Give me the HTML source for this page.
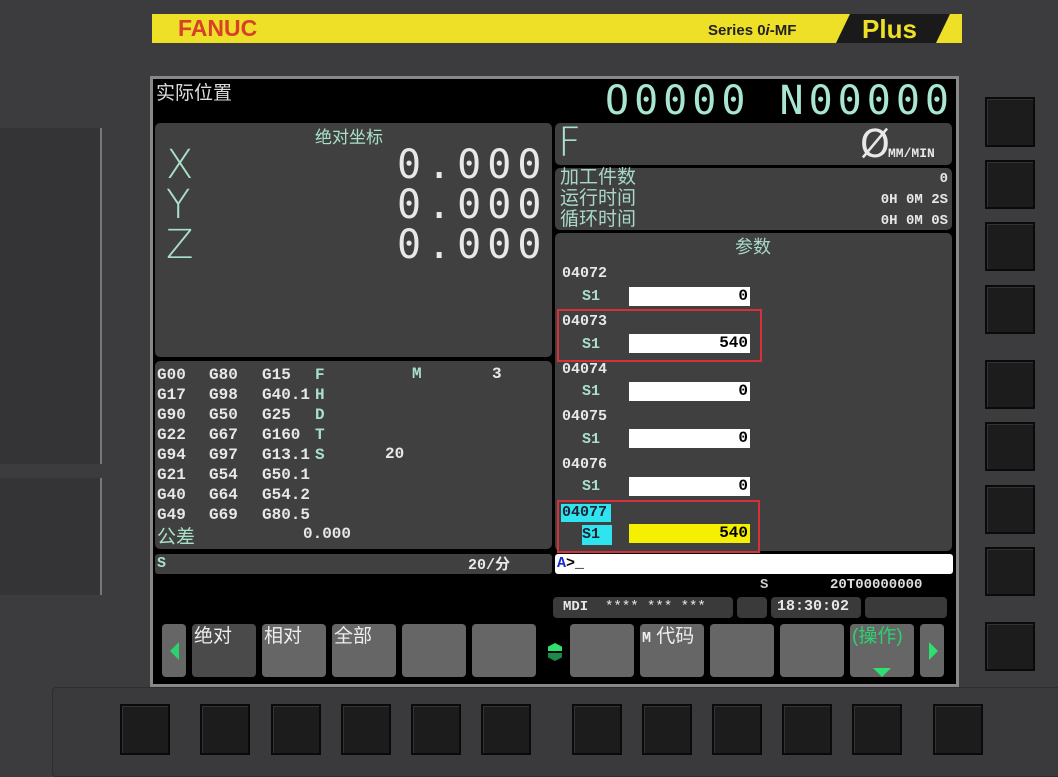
<!DOCTYPE html>
<html><head><meta charset="utf-8"><style>
*{margin:0;padding:0;box-sizing:border-box}
body{width:1058px;height:771px;background:#3c3c3e;position:relative;overflow:hidden;font-family:"Liberation Mono","Noto Sans CJK SC",monospace}
.a{position:absolute}
.key{position:absolute;background:#1c1c1c;border:2px solid #0a0a0a;box-shadow:inset 1px 1px 0 #333}
.pn{position:absolute;background:#404040;border-radius:5px}
.t{position:absolute;color:#a8e0c8;white-space:pre}
.w{position:absolute;color:#e8e8e8;white-space:pre;font-weight:bold}
.g{position:absolute;color:#e8e8e8;white-space:pre;font-weight:bold;font-size:16px;line-height:20px;top:365px}
.sk{position:absolute;top:624px;height:53px;background:#666;border-radius:4px;color:#eee;font-family:"Liberation Sans","Noto Sans CJK SC",sans-serif;font-size:19px;padding:0 2px;line-height:26px}
.box{position:absolute;left:629px;width:121px;height:19px;background:#fff;color:#000;text-align:right;font-weight:bold;font-size:16px;line-height:19px;padding-right:2px}
.pid{font-size:15px}
</style></head><body>
<!-- banner -->
<div class="a" style="left:152px;top:14px;width:810px;height:29px;background:#ede027"></div>
<div class="a" style="left:178px;top:14px;font-family:'Liberation Sans',sans-serif;font-weight:bold;font-size:23px;color:#d8402a;line-height:29px">FANUC</div>
<div class="a" style="left:708px;top:14px;font-family:'Liberation Sans',sans-serif;font-weight:bold;font-size:15px;color:#222;line-height:34px">Series 0<i>i</i>-MF</div>
<div class="a" style="left:836px;top:14px;width:114px;height:29px;background:#1a1a1a;clip-path:polygon(14px 0,100% 0,calc(100% - 14px) 100%,0 100%)"></div>
<div class="a" style="left:862px;top:13px;font-family:'Liberation Sans',sans-serif;font-weight:bold;font-size:26px;color:#ede027;line-height:32px">Plus</div>
<!-- left side panels -->
<div class="a" style="left:0;top:128px;width:102px;height:336px;background:#343436;border-right:2px solid #777"></div>
<div class="a" style="left:0;top:478px;width:102px;height:117px;background:#343436;border-right:2px solid #777"></div>
<!-- right keys -->
<div class="key" style="left:985px;top:97px;width:50px;height:50px"></div>
<div class="key" style="left:985px;top:160px;width:50px;height:49px"></div>
<div class="key" style="left:985px;top:222px;width:50px;height:49px"></div>
<div class="key" style="left:985px;top:285px;width:50px;height:49px"></div>
<div class="key" style="left:985px;top:360px;width:50px;height:49px"></div>
<div class="key" style="left:985px;top:422px;width:50px;height:49px"></div>
<div class="key" style="left:985px;top:485px;width:50px;height:49px"></div>
<div class="key" style="left:985px;top:547px;width:50px;height:49px"></div>
<div class="key" style="left:985px;top:622px;width:50px;height:49px"></div>
<!-- bottom bezel -->
<div class="a" style="left:52px;top:687px;width:1010px;height:90px;background:#3a3a3c;border:1px solid #2e2e2e;border-radius:4px"></div>
<div class="key" style="left:120px;top:704px;width:50px;height:51px"></div>
<div class="key" style="left:200px;top:704px;width:50px;height:51px"></div>
<div class="key" style="left:271px;top:704px;width:50px;height:51px"></div>
<div class="key" style="left:341px;top:704px;width:50px;height:51px"></div>
<div class="key" style="left:411px;top:704px;width:50px;height:51px"></div>
<div class="key" style="left:481px;top:704px;width:50px;height:51px"></div>
<div class="key" style="left:572px;top:704px;width:50px;height:51px"></div>
<div class="key" style="left:642px;top:704px;width:50px;height:51px"></div>
<div class="key" style="left:712px;top:704px;width:50px;height:51px"></div>
<div class="key" style="left:782px;top:704px;width:50px;height:51px"></div>
<div class="key" style="left:852px;top:704px;width:50px;height:51px"></div>
<div class="key" style="left:933px;top:704px;width:50px;height:51px"></div>
<!-- screen -->
<div class="a" style="left:150px;top:76px;width:809px;height:611px;background:#888"></div>
<div class="a" style="left:153px;top:79px;width:803px;height:605px;background:#000"></div>
<div class="a" style="left:156px;top:78px;color:#ddd;font-family:'Liberation Sans','Noto Sans CJK SC',sans-serif;font-size:19px">实际位置</div>
<div class="t" style="left:605px;top:79px;font-size:40px;line-height:44px;letter-spacing:5px;font-family:'DejaVu Sans Mono',monospace;color:#a8e6d2">O0000 N00000</div>
<!-- left panel -->
<div class="pn" style="left:155px;top:123px;width:397px;height:234px"></div>
<div class="t" style="left:315px;top:123px;font-family:'Noto Sans CJK SC',sans-serif;font-size:17px;color:#a8e0c8">绝对坐标</div>
<div class="t" style="left:166px;top:145px;font-size:40px;line-height:40px;font-family:'DejaVu Sans',sans-serif;font-weight:200">X<br>Y<br>Z</div>
<div class="w" style="left:397px;top:145px;font-size:40px;line-height:40px;font-family:'DejaVu Sans Mono',monospace;letter-spacing:6px;font-weight:normal">0.000<br>0.000<br>0.000</div>
<!-- F panel -->
<div class="pn" style="left:555px;top:123px;width:397px;height:42px"></div>
<div class="t" style="left:558px;top:122px;font-size:40px;line-height:42px;font-family:'DejaVu Sans',sans-serif;font-weight:200">F</div>
<div class="w" style="left:860px;top:123px;font-size:38px;line-height:42px;font-family:'DejaVu Sans',sans-serif;font-weight:normal">Ø</div>
<div class="w" style="left:888px;top:146px;font-size:13px">MM/MIN</div>
<div class="pn" style="left:555px;top:168px;width:397px;height:62px"></div>
<div class="t" style="left:560px;top:165px;font-family:'Noto Sans CJK SC',sans-serif;font-size:19px;line-height:21px;color:#a8d8c8">加工件数<br>运行时间<br>循环时间</div>
<div class="w" style="left:800px;top:169px;width:148px;text-align:right;font-size:14px;line-height:21px">0<br>0H 0M 2S<br>0H 0M 0S</div>
<!-- params -->
<div class="pn" style="left:555px;top:233px;width:397px;height:318px"></div>
<div class="t" style="left:735px;top:233px;font-family:'Noto Sans CJK SC',sans-serif;font-size:18px;color:#a8d8c8">参数</div>
<div class="w pid" style="left:562px;top:265px">04072</div><div class="t pid" style="left:582px;top:288px;font-weight:bold">S1</div><div class="box" style="top:287px">0</div>
<div class="w pid" style="left:562px;top:313px">04073</div><div class="t pid" style="left:582px;top:336px;font-weight:bold">S1</div><div class="box" style="top:334px">540</div>
<div class="w pid" style="left:562px;top:361px">04074</div><div class="t pid" style="left:582px;top:383px;font-weight:bold">S1</div><div class="box" style="top:382px">0</div>
<div class="w pid" style="left:562px;top:408px">04075</div><div class="t pid" style="left:582px;top:431px;font-weight:bold">S1</div><div class="box" style="top:429px">0</div>
<div class="w pid" style="left:562px;top:456px">04076</div><div class="t pid" style="left:582px;top:478px;font-weight:bold">S1</div><div class="box" style="top:477px">0</div>
<div class="a" style="left:561px;top:504px;width:50px;height:18px;background:#2ee4ee"></div>
<div class="a pid" style="left:562px;top:504px;color:#223;font-weight:bold">04077</div>
<div class="a" style="left:582px;top:525px;width:30px;height:20px;background:#2ee4ee"></div>
<div class="a pid" style="left:582px;top:526px;color:#223;font-weight:bold">S1</div>
<div class="box" style="top:524px;background:#f4f000">540</div>
<div class="a" style="left:557px;top:309px;width:205px;height:53px;border:2px solid #d8303a"></div>
<div class="a" style="left:557px;top:500px;width:203px;height:53px;border:2px solid #d8303a"></div>
<!-- modal -->
<div class="pn" style="left:155px;top:361px;width:397px;height:188px"></div>
<div class="g" style="left:157px">G00
G17
G90
G22
G94
G21
G40
G49</div>
<div class="g" style="left:209px">G80
G98
G50
G67
G97
G54
G64
G69</div>
<div class="g" style="left:262px">G15
G40.1
G25
G160
G13.1
G50.1
G54.2
G80.5</div>
<div class="t" style="left:315px;top:365px;font-size:16px;line-height:20px;font-weight:bold">F<br>H<br>D<br>T<br>S</div>
<div class="t" style="left:412px;top:365px;font-size:16px;font-weight:bold">M</div>
<div class="w" style="left:492px;top:365px;font-size:16px">3</div>
<div class="w" style="left:385px;top:445px;font-size:16px">20</div>
<div class="t" style="left:157px;top:524px;font-family:'Noto Sans CJK SC',sans-serif;font-size:19px;line-height:24px">公差</div>
<div class="w" style="left:303px;top:525px;font-size:16px">0.000</div>
<div class="pn" style="left:155px;top:554px;width:397px;height:20px;border-radius:3px"></div>
<div class="t" style="left:157px;top:555px;font-size:15px;font-weight:bold">S</div>
<div class="w" style="left:468px;top:553px;font-size:15px;font-family:'Liberation Mono','Noto Sans CJK SC',monospace">20/分</div>
<div class="a" style="left:555px;top:554px;width:398px;height:20px;background:#fff;border-radius:3px"></div>
<div class="a" style="left:557px;top:555px;font-size:15px;font-weight:bold;color:#1a28d0">A<span style="color:#000">&gt;_</span></div>
<div class="w" style="left:760px;top:577px;font-size:14px;color:#ccc">S</div>
<div class="w" style="left:830px;top:577px;font-size:14px;color:#ddd">20T00000000</div>
<div class="a" style="left:553px;top:597px;width:180px;height:21px;background:#3a3a3a;border-radius:4px"></div>
<div class="w" style="left:563px;top:599px;font-size:14px">MDI  <span style="font-weight:normal">**** *** ***</span></div>
<div class="a" style="left:737px;top:597px;width:30px;height:21px;background:#3a3a3a;border-radius:4px"></div>
<div class="a" style="left:771px;top:597px;width:90px;height:21px;background:#3a3a3a;border-radius:4px"></div>
<div class="w" style="left:777px;top:598px;font-size:15px">18:30:02</div>
<div class="a" style="left:865px;top:597px;width:82px;height:21px;background:#3a3a3a;border-radius:4px"></div>
<!-- softkeys -->
<div class="sk" style="left:162px;width:24px"></div>
<div class="a" style="left:170px;top:642px;width:0;height:0;border-top:9px solid transparent;border-bottom:9px solid transparent;border-right:9px solid #2ed070"></div>
<div class="sk" style="left:192px;width:64px;background:#4a4a4a">绝对</div>
<div class="sk" style="left:262px;width:64px">相对</div>
<div class="sk" style="left:332px;width:64px">全部</div>
<div class="sk" style="left:402px;width:64px"></div>
<div class="sk" style="left:472px;width:64px"></div>
<div class="a" style="left:548px;top:643px;width:14px;height:18px;background:linear-gradient(#2ee070 45%,transparent 45%,transparent 55%,#1a8a48 55%);clip-path:polygon(50% 0,100% 20%,100% 80%,50% 100%,0 80%,0 20%)"></div>
<div class="sk" style="left:570px;width:64px"></div>
<div class="sk" style="left:640px;width:64px"><b style="font-family:'Liberation Mono';font-size:15px">M</b> 代码</div>
<div class="sk" style="left:710px;width:64px"></div>
<div class="sk" style="left:780px;width:64px"></div>
<div class="sk" style="left:850px;width:64px;color:#2ed070">(操作)</div>
<div class="a" style="left:873px;top:668px;width:0;height:0;border-left:9px solid transparent;border-right:9px solid transparent;border-top:9px solid #2ee070"></div>
<div class="sk" style="left:920px;width:24px"></div>
<div class="a" style="left:929px;top:642px;width:0;height:0;border-top:9px solid transparent;border-bottom:9px solid transparent;border-left:9px solid #2ee070"></div>
</body></html>
